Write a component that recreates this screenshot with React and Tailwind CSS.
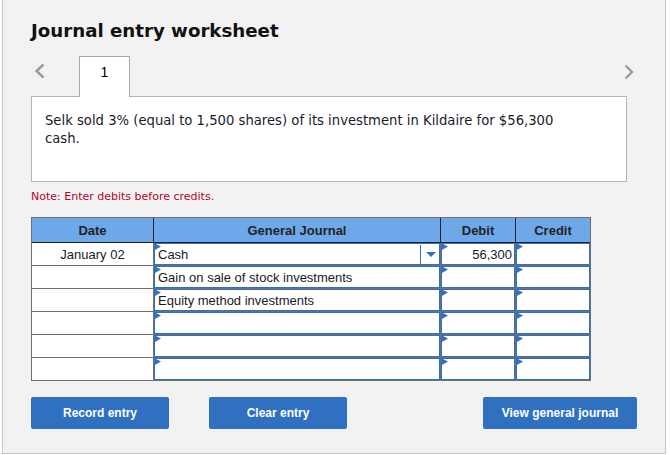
const rows = [
  { date: "January 02", account: "Cash", debit: "56,300", dropdown: true },
  { date: "", account: "Gain on sale of stock investments" },
  { date: "", account: "Equity method investments" },
  { date: "", account: "" },
  { date: "", account: "" },
  { date: "", account: "" },
];

function Marker() {
  return (
    <svg className="absolute -left-px -top-px" width="8" height="8" viewBox="0 0 8 8">
      <polygon points="0,0 7,3.5 0,7.5" fill="#2f70c1" />
    </svg>
  );
}

function InputCell({ className, innerClassName, children }) {
  return (
    <div className={`border-[#707070] ${className}`}>
      <div className={`relative flex h-full items-center border border-[#2f70c1] bg-white pt-[2px] ${innerClassName}`}>
        <Marker />
        {children}
      </div>
    </div>
  );
}

function ActionButton({ className, children }) {
  return (
    <button className={`h-[32px] rounded-[2px] bg-[#2f70c1] text-[12px] font-bold text-white ${className}`}>
      {children}
    </button>
  );
}

export default function App() {
  return (
    <div className="h-[455px] w-[670px] bg-white font-['Liberation_Sans',sans-serif]">
      <div className="ml-[2px] h-[454px] w-[664px] border-x border-b border-[#c4c4c4] bg-[#f2f2f2] pl-[28px] pr-[38px] text-black">
        <h1 className="pt-[20px] font-['DejaVu_Sans',sans-serif] text-[18.2px] font-bold leading-[22px] text-[#111]">
          Journal entry worksheet
        </h1>

        {/* Tab strip */}
        <div className="mt-[14px] flex h-[40px] items-start">
          <svg className="mt-[7px] ml-[3px]" width="11" height="16" viewBox="0 0 11 16">
            <path d="M9.5 1.5 L2.5 8 L9.5 14.5" fill="none" stroke="#999" strokeWidth="2.4" />
          </svg>
          <div className="relative z-10 ml-[34px] flex h-[41px] w-[51px] items-start justify-center border-x border-t border-[#a8a8a8] bg-white pt-[6px] text-[14px] leading-[18px]">
            1
          </div>
          <svg className="mt-[8px] ml-auto mr-[-7px]" width="10" height="16" viewBox="0 0 10 16">
            <path d="M1.5 1.5 L8 8 L1.5 14.5" fill="none" stroke="#999" strokeWidth="2.2" />
          </svg>
        </div>

        <div className="h-[86px] w-[596px] border border-[#b5b5b5] bg-white pl-[13px] pr-[60px] pt-[15px] font-['DejaVu_Sans',sans-serif] text-[13.2px] leading-[18px] text-[#1a1a2a]">
          Selk sold 3% (equal to 1,500 shares) of its investment in Kildaire for $56,300 cash.
        </div>

        <p className="mt-[8px] font-['DejaVu_Sans',sans-serif] text-[11px] leading-[14px] text-[#b0062c]">
          Note: Enter debits before credits.
        </p>

        {/* Journal table */}
        <div className="mt-[13px] w-[560px] border border-[#707070] bg-white">
          <div className="flex h-[25px] border-b border-[#222] bg-[#6fa8e8] text-[13px] font-bold leading-[25px] text-[#222]">
            <div className="w-[122px] border-r border-[#222] text-center">Date</div>
            <div className="w-[287px] border-r border-[#222] text-center">General Journal</div>
            <div className="w-[75px] border-r border-[#222] text-center">Debit</div>
            <div className="flex-1 text-center">Credit</div>
          </div>
          {rows.map((row, i) => {
            const rowLine = i < 5 ? "border-b" : "";
            return (
              <div key={i} className={`flex text-[13px] leading-[18px] text-[#1a1a1a] ${i < 5 ? "h-[23px]" : "h-[22px]"}`}>
                <div className={`flex w-[122px] items-center justify-center border-r border-[#707070] pt-[1px] ${rowLine}`}>
                  {row.date}
                </div>
                <InputCell className={`w-[287px] border-r ${rowLine}`} innerClassName="pl-[3px]">
                  <span className="flex-1">{row.account}</span>
                  {row.dropdown && (
                    <div className="-mt-[2px] flex h-[19px] w-[19px] items-center justify-center border-l border-[#2f70c1] pl-[2px]">
                      <svg width="10" height="5" viewBox="0 0 10 5">
                        <polygon points="0,0 10,0 5,5" fill="#2f70c1" />
                      </svg>
                    </div>
                  )}
                </InputCell>
                <InputCell className={`w-[75px] border-r ${rowLine}`} innerClassName="justify-end pr-[2px]">
                  {row.debit}
                </InputCell>
                <InputCell className={`flex-1 ${rowLine}`} />
              </div>
            );
          })}
        </div>

        <div className="mt-[16px] flex w-[606px] items-start">
          <ActionButton className="w-[138px]">Record entry</ActionButton>
          <ActionButton className="ml-[40px] w-[138px]">Clear entry</ActionButton>
          <ActionButton className="ml-auto w-[154px]">View general journal</ActionButton>
        </div>
      </div>
    </div>
  );
}
